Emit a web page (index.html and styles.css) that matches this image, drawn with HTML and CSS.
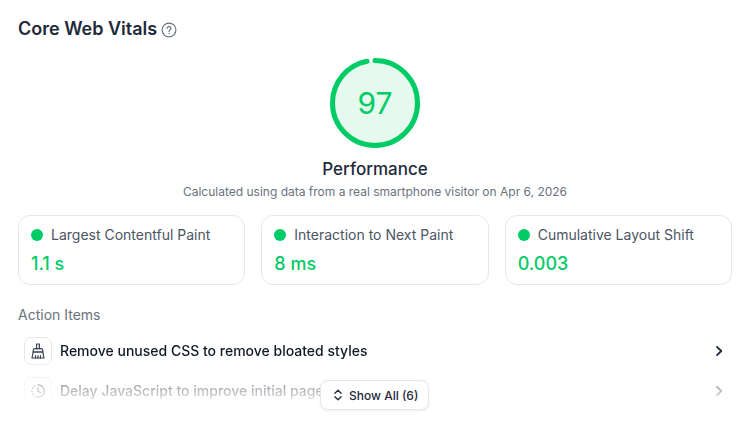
FILE: index.html
```html
<!DOCTYPE html>
<html>
<head>
  <title>Core Web Vitals</title>
  <link rel="stylesheet" href="styles.css">
</head>
<body>
  <div class="panel">
    <div class="panel-title">
      <h2>Core Web Vitals</h2>
      <svg class="help-icon" viewBox="0 0 16 16" width="16" height="16" fill="none" stroke="#6b7280" stroke-width="1.2" stroke-linecap="round">
        <circle cx="8" cy="8" r="6.9"/>
        <path d="M6.2 6.3a1.85 1.85 0 1 1 2.8 1.6c-.6.35-1 .7-1 1.4"/>
        <path d="M8 11.3v.1"/>
      </svg>
    </div>

    <!-- Score gauge -->
    <div class="score">
      <div class="gauge">
        <svg viewBox="0 0 90 90" width="90" height="90">
          <circle cx="45" cy="45" r="42" fill="#e5f9ef"/>
          <circle class="gauge-arc" cx="45" cy="45" r="42.5" pathLength="100" stroke-dasharray="97 3" transform="rotate(-90 45 45)"/>
        </svg>
        <span class="gauge-value">97</span>
      </div>
      <div class="score-label">Performance</div>
      <div class="score-note">Calculated using data from a real smartphone visitor on Apr 6, 2026</div>
    </div>

    <!-- Metric cards -->
    <div class="metrics">
      <div class="metric-card">
        <div class="metric-name"><span class="dot"></span>Largest Contentful Paint</div>
        <div class="metric-value">1.1 s</div>
      </div>
      <div class="metric-card">
        <div class="metric-name"><span class="dot"></span>Interaction to Next Paint</div>
        <div class="metric-value">8 ms</div>
      </div>
      <div class="metric-card">
        <div class="metric-name"><span class="dot"></span>Cumulative Layout Shift</div>
        <div class="metric-value">0.003</div>
      </div>
    </div>

    <div class="actions">
      <div class="actions-title">Action Items</div>
      <div class="action-list">
        <div class="action-row">
          <span class="action-icon">
            <svg viewBox="0 0 16 16" width="16" height="16" fill="none" stroke="#374151" stroke-width="1.2" stroke-linejoin="round" stroke-linecap="round">
              <path d="M6.600 1h2.800v4.600H6.600z"/>
              <path d="M3.200 9V7.400c0-1 .800-1.800 1.800-1.800h6c1 0 1.800.800 1.800 1.800V9z"/>
              <path d="M2 15h12l-1.200-6H3.200z"/>
              <path d="M5.500 15v-2.500M8 15v-2.500M10.500 15v-2.500"/>
            </svg>
          </span>
          <span class="action-text">Remove unused CSS to remove bloated styles</span>
          <svg class="chevron" viewBox="0 0 16 16" width="16" height="16" fill="none" stroke="#1f2937" stroke-width="1.800" stroke-linecap="round" stroke-linejoin="round"><path d="M6 3.800 10.300 8 6 12.200"/></svg>
        </div>
        <div class="action-row">
          <span class="action-icon">
            <svg viewBox="0 0 16 16" width="16" height="16" fill="none" stroke="#374151" stroke-width="1.200" stroke-linecap="round" stroke-linejoin="round">
              <path d="M8 1.800a6.200 6.200 0 1 1-1.500 12.200"/>
              <path d="M1.900 8.700v-.4M2.700 11.200l-.2-.3M4.300 13l-.3-.2M2.700 5l-.2.300M4.600 2.900l-.3.200"/>
              <path d="M8 4.800V8.300l2.400 1.400"/>
            </svg>
          </span>
          <span class="action-text">Delay JavaScript to improve initial page load</span>
          <svg class="chevron" viewBox="0 0 16 16" width="16" height="16" fill="none" stroke="#1f2937" stroke-width="1.800" stroke-linecap="round" stroke-linejoin="round"><path d="M6 3.800 10.300 8 6 12.200"/></svg>
        </div>
      </div>
      <button class="show-all">
        <svg viewBox="0 0 16 16" width="14" height="14" fill="none" stroke="#1f2937" stroke-width="1.500" stroke-linecap="round" stroke-linejoin="round"><path d="M4.500 6 8 2.500 11.500 6M4.500 10 8 13.500 11.500 10"/></svg>
        Show All (6)
      </button>
    </div>
  </div>
</body>
</html>
```

FILE: styles.css
```css
body {
  margin: 0;
  background-color: #fff;
  font-family: Inter, "Liberation Sans", sans-serif;
  color: #1e293b;
}

.panel {
  height: 428px;
  box-sizing: border-box;
  padding: 18px 18px 0;
  overflow: hidden;
}

.panel-title {
  display: flex;
  align-items: center;
  gap: 4px;
  height: 22px;
}

.panel-title h2 {
  margin: 0;
  font-size: 18px;
  font-weight: 600;
  line-height: 22px;
}

.help-icon {
  margin-top: 1px;
}

.score {
  display: flex;
  flex-direction: column;
  align-items: center;
  margin-top: 18px;
}

.gauge {
  position: relative;
  width: 90px;
  height: 90px;
}

.gauge svg {
  display: block;
}

.gauge-arc {
  fill: none;
  stroke: #00cc66;
  stroke-width: 5;
  stroke-linecap: round;
}

.gauge-value {
  position: absolute;
  inset: 0;
  display: flex;
  align-items: center;
  justify-content: center;
  font-size: 30px;
  color: #00cc66;
}

.score-label {
  margin-top: 10px;
  font-size: 17px;
  font-weight: 500;
  line-height: 22px;
}

.score-note {
  margin-top: 4px;
  font-size: 12px;
  line-height: 16px;
  color: #6b7280;
}

.metrics {
  display: grid;
  grid-template-columns: repeat(3, 1fr);
  gap: 16px;
  margin-top: 15px;
}

.metric-card {
  height: 70px;
  box-sizing: border-box;
  padding: 9px 12px;
  border: 1px solid #e5e7eb;
  border-radius: 12px;
}

.metric-name {
  display: flex;
  align-items: center;
  gap: 8px;
  font-size: 14px;
  line-height: 20px;
  color: #4b5563;
}

.dot {
  width: 12px;
  height: 12px;
  border-radius: 50%;
  background-color: #00cc66;
}

.metric-value {
  margin-top: 7px;
  font-size: 18px;
  font-weight: 500;
  line-height: 24px;
  color: #00cc66;
}

.actions {
  position: relative;
  margin-top: 21px;
}

.actions-title {
  font-size: 14px;
  line-height: 18px;
  color: #6b7280;
}

.action-list {
  display: flex;
  flex-direction: column;
  gap: 12px;
  height: 72px;
  margin-top: 4px;
  padding: 9px 6px 0;
  overflow: hidden;
  -webkit-mask-image: linear-gradient(to bottom, #000 38%, rgba(0, 0, 0, 0.4) 70%, transparent 100%);
  mask-image: linear-gradient(to bottom, #000 38%, rgba(0, 0, 0, 0.4) 70%, transparent 100%);
}

.action-row {
  display: flex;
  align-items: center;
  gap: 8px;
  flex-shrink: 0;
  height: 28px;
}

.action-icon {
  display: flex;
  align-items: center;
  justify-content: center;
  width: 26px;
  height: 26px;
  border: 1px solid #e5e7eb;
  border-radius: 7px;
}

.action-text {
  flex: 1;
  padding-bottom: 2px;
  font-size: 14px;
  font-weight: 500;
  color: #111827;
}

.chevron {
  margin-right: -1px;
}

.show-all {
  position: absolute;
  left: 302px;
  top: 74px;
  display: flex;
  align-items: center;
  gap: 4px;
  height: 30px;
  padding: 0 10px;
  background-color: #fff;
  border: 1px solid #e5e7eb;
  border-radius: 8px;
  box-shadow: 0 1px 3px rgba(0, 0, 0, 0.08);
  font-family: inherit;
  font-size: 12px;
  font-weight: 500;
  color: #1e293b;
}
```
